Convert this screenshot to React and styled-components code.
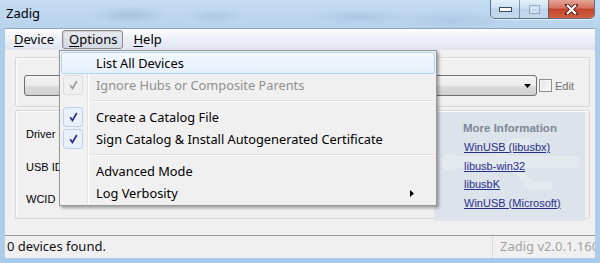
import React from "react";
import styled, { createGlobalStyle } from "styled-components";

const Global = createGlobalStyle`
  html, body { margin: 0; padding: 0; background: #fff; }
  body { width: 600px; height: 263px; overflow: hidden; }
  * { box-sizing: border-box; }
`;

const Window = styled.div`
  position: relative;
  width: 600px;
  height: 263px;
  display: flex;
  flex-direction: column;
  background: #acccea;
  overflow: hidden;
  font-family: "Noto Sans", sans-serif;
`;

const TitleBar = styled.div`
  height: 28px;
  flex: none;
  display: flex;
  justify-content: space-between;
  align-items: flex-start;
  padding: 0 5px 0 6px;
  background:
    radial-gradient(ellipse 40px 9px at 130px 15px, rgba(110, 140, 180, 0.28), transparent),
    radial-gradient(ellipse 30px 8px at 215px 16px, rgba(110, 140, 180, 0.2), transparent),
    radial-gradient(ellipse 50px 8px at 360px 17px, rgba(110, 140, 180, 0.22), transparent),
    radial-gradient(ellipse 60px 10px at 450px 20px, rgba(120, 150, 185, 0.2), transparent),
    linear-gradient(#c4dcf2, #b9d3ed);
`;

const Title = styled.div`
  font-size: 13px;
  line-height: 27px;
  color: #000;
`;

const WinButtons = styled.div`
  display: flex;
  height: 19px;
  border: 1px solid rgba(55, 75, 105, 0.75);
  border-top: none;
  border-radius: 0 0 5px 5px;
  overflow: hidden;
  box-shadow: 0 1px 0 rgba(255, 255, 255, 0.6);
`;

const WinButton = styled.div`
  width: ${(p) => p.$w}px;
  height: 100%;
  display: flex;
  align-items: center;
  justify-content: center;
  border-left: ${(p) => (p.$first ? "none" : "1px solid rgba(60, 80, 110, 0.55)")};
  background: ${(p) =>
    p.$close
      ? "linear-gradient(#e5a598, #d5725f 45%, #c3432d 50%, #d0603f)"
      : "linear-gradient(rgba(255,255,255,0.55), rgba(220,232,245,0.4) 45%, rgba(180,200,225,0.35) 50%, rgba(200,220,240,0.5))"};
`;

const Client = styled.div`
  flex: 1;
  margin: 0 5px;
  display: flex;
  flex-direction: column;
  background: #f0f0f0;
  min-height: 0;
`;

const MenuBar = styled.div`
  height: 22px;
  flex: none;
  display: flex;
  align-items: center;
  padding-left: 1px;
  border-top: 1px solid #8ea6c0;
  background: linear-gradient(#fbfcfe, #eceff7 50%, #dfe4f0);
`;

const MenuBarItem = styled.div`
  height: 19px;
  padding: 0 ${(p) => (p.$active ? 5 : 7)}px 0 ${(p) => (p.$active ? 6 : 7)}px;
  margin-right: ${(p) => (p.$active ? 2 : 0)}px;
  font-size: 13px;
  line-height: 17px;
  color: #000;
  border: 1px solid ${(p) => (p.$active ? "#8b8c8e" : "transparent")};
  border-radius: 3px;
  background: ${(p) =>
    p.$active ? "linear-gradient(#e8ebf0, #dde2e9 50%, #d3d9e2)" : "transparent"};
  box-shadow: ${(p) => (p.$active ? "inset 1px 1px 1px rgba(0,0,0,0.12)" : "none")};
  u { text-decoration: underline; text-underline-offset: 2px; }
`;

const Body = styled.div`
  flex: 1;
  display: flex;
  flex-direction: column;
  gap: 3px;
  padding: 7px 5px 0 10px;
`;

const Panel = styled.div`
  height: ${(p) => p.$h}px;
  border: 1px solid #d7d7d7;
  box-shadow: inset 1px 1px 0 #fbfbfb;
  border-radius: 2px;
`;

const ComboRow = styled.div`
  display: flex;
  align-items: center;
  padding: 17px 0 0 8px;
`;

const Combo = styled.div`
  width: 513px;
  height: 21px;
  border: 1px solid #707070;
  border-radius: 3px;
  background: linear-gradient(#f3f3f3, #ebebeb 50%, #dddddd 51%, #d0d0d0);
  display: flex;
  align-items: center;
  justify-content: flex-end;
  padding-right: 5px;
`;

const CheckBox = styled.div`
  width: 13px;
  height: 13px;
  margin-left: 2px;
  border: 1px solid #8e8f8f;
  background: linear-gradient(135deg, #e4e4e4, #fafafa);
  box-shadow: inset 0 0 0 1px #f4f4f4;
`;

const EditLabel = styled.span`
  margin-left: 3px;
  font-family: "Liberation Sans", Arial, sans-serif;
  font-size: 11px;
  color: #6f6f6f;
`;

const DetailGrid = styled.div`
  height: 100%;
  display: grid;
  grid-template-columns: 1fr 151px;
  padding: 1px 4px 0 10px;
`;

const Labels = styled.div`
  display: flex;
  flex-direction: column;
  gap: 19.5px;
  padding-top: 16px;
`;

const FieldLabel = styled.div`
  height: 13px;
  font-family: "Liberation Sans", Arial, sans-serif;
  font-size: 11px;
  line-height: 13px;
  color: #000;
  sup { font-size: 8px; line-height: 0; vertical-align: 4px; }
`;

const InfoBox = styled.div`
  position: relative;
  height: 109px;
  background: #dde3ea;
  padding: 10px 0 0 29px;
  display: flex;
  flex-direction: column;
  overflow: hidden;
`;

const Watermark = styled.svg`
  position: absolute;
  left: 0;
  top: 0;
  pointer-events: none;
`;

const InfoTitle = styled.div`
  position: relative;
  font-family: "Liberation Sans", Arial, sans-serif;
  font-weight: bold;
  font-size: 11.5px;
  line-height: 13px;
  color: #7c8696;
  margin-bottom: 6px;
`;

const InfoLink = styled.a`
  position: relative;
  font-family: "Liberation Sans", Arial, sans-serif;
  font-size: 11px;
  line-height: 13px;
  height: 18.5px;
  color: #282f8a;
  text-decoration: underline;
  margin-left: 1px;
`;

const StatusBar = styled.div`
  height: 23px;
  flex: none;
  display: flex;
  border-top: 1px solid #9a9a9a;
  background: #f0f0f0;
`;

const StatusText = styled.div`
  flex: 1;
  padding-left: 2px;
  font-size: 13px;
  line-height: 21px;
  color: #111;
`;

const StatusVersion = styled.div`
  width: 103px;
  border-left: 1px solid #dadada;
  padding-left: 7px;
  font-size: 13px;
  line-height: 21px;
  color: #a3a3a3;
  white-space: nowrap;
  overflow: hidden;
`;

const BottomFrame = styled.div`
  height: 5px;
  flex: none;
  background: #a9cae9;
`;

const Menu = styled.div`
  position: absolute;
  left: 59px;
  top: 50px;
  width: 378px;
  height: 156px;
  border: 1px solid #979797;
  padding: 1px 0;
  background: linear-gradient(
    to right,
    #f1f1f1 0 27px,
    #e2e3e3 27px 28px,
    #ffffff 28px 29px,
    #f0f0f0 29px
  );
  box-shadow: 2px 2px 3px rgba(0, 0, 0, 0.35);
  font-family: "Noto Sans", sans-serif;
  display: flex;
  flex-direction: column;
`;

const Item = styled.div`
  height: 22px;
  margin: 0 1px;
  display: grid;
  grid-template-columns: 22px 1fr 24px;
  column-gap: 10px;
  align-items: center;
  padding-left: 2px;
  border: 1px solid ${(p) => (p.$hover ? "#b3d3f3" : "transparent")};
  border-radius: 3px;
  background: ${(p) =>
    p.$hover ? "linear-gradient(#f3f8fe, #e6effb)" : "transparent"};
  font-size: 12.8px;
  color: ${(p) => (p.$disabled ? "#8f8f8f" : "#000")};
`;

const CheckMark = styled.div`
  width: 20px;
  height: 20px;
  margin-left: -1px;
  display: flex;
  align-items: center;
  justify-content: center;
  border: 1px solid ${(p) => (p.$disabled ? "#dcdcdc" : "#b9d1ee")};
  border-radius: 3px;
  background: ${(p) => (p.$disabled ? "#f0f0f0" : "#e9f0f9")};
`;

const Sep = styled.div`
  height: 10px;
  margin-left: 30px;
  margin-right: 2px;
  background: linear-gradient(
    transparent 4px,
    #e0e0e0 4px 5px,
    #ffffff 5px 6px,
    transparent 6px
  );
`;

const Check = ({ disabled }) => (
  <CheckMark $disabled={disabled}>
    <svg width="9" height="10" viewBox="0 0 9 10">
      <path
        d="M1.2 5.2 L3.4 8.4 L7.8 1"
        fill="none"
        stroke={disabled ? "#9a9a9a" : "#1d2b82"}
        strokeWidth="1.6"
      />
    </svg>
  </CheckMark>
);

export default function App() {
  return (
    <>
      <Global />
      <Window>
        <TitleBar>
          <Title>Zadig</Title>
          <WinButtons>
            <WinButton $w={28} $first>
              <svg width="13" height="6" viewBox="0 0 13 6">
                <rect x="0.5" y="1.5" width="12" height="4" fill="#fff" stroke="#3c4a5e" />
              </svg>
            </WinButton>
            <WinButton $w={29}>
              <svg width="11" height="9" viewBox="0 0 11 9">
                <rect x="0.5" y="0.5" width="10" height="8" fill="none" stroke="rgba(90,105,125,0.45)" />
                <rect x="2" y="3" width="7" height="4" fill="none" stroke="rgba(255,255,255,0.5)" />
              </svg>
            </WinButton>
            <WinButton $w={46} $close>
              <svg width="13" height="11" viewBox="0 0 13 11">
                <path d="M2 1 L11 10 M11 1 L2 10" stroke="#5a1d14" strokeWidth="4" strokeLinecap="square" />
                <path d="M2 1 L11 10 M11 1 L2 10" stroke="#fff" strokeWidth="2.2" />
              </svg>
            </WinButton>
          </WinButtons>
        </TitleBar>

        <Client>
          <MenuBar>
            <MenuBarItem>
              <u>D</u>evice
            </MenuBarItem>
            <MenuBarItem $active>
              <u>O</u>ptions
            </MenuBarItem>
            <MenuBarItem>
              <u>H</u>elp
            </MenuBarItem>
          </MenuBar>

          <Body>
            <Panel $h={50}>
              <ComboRow>
                <Combo>
                  <svg width="7" height="4" viewBox="0 0 7 4">
                    <path d="M0 0 H7 L3.5 4 Z" fill="#000" />
                  </svg>
                </Combo>
                <CheckBox />
                <EditLabel>Edit</EditLabel>
              </ComboRow>
            </Panel>
            <Panel $h={109}>
              <DetailGrid>
                <Labels>
                  <FieldLabel>Driver</FieldLabel>
                  <FieldLabel>USB ID</FieldLabel>
                  <FieldLabel>
                    WCID <sup>?</sup>
                  </FieldLabel>
                </Labels>
                <InfoBox>
                  <Watermark width="151" height="109" viewBox="0 0 151 109">
                    <g fill="#ffffff" opacity="0.22">
                      <circle cx="16" cy="50" r="9" />
                      <rect x="16" y="44" width="128" height="12" rx="3" />
                      <path d="M60 44 L78 26 H96 V34 H82 L68 48 Z" />
                      <path d="M86 56 L100 70 H118 V78 H96 L80 60 Z" />
                    </g>
                  </Watermark>
                  <InfoTitle>More Information</InfoTitle>
                  <InfoLink>WinUSB (libusbx)</InfoLink>
                  <InfoLink>libusb-win32</InfoLink>
                  <InfoLink>libusbK</InfoLink>
                  <InfoLink>WinUSB (Microsoft)</InfoLink>
                </InfoBox>
              </DetailGrid>
            </Panel>
          </Body>

          <StatusBar>
            <StatusText>0 devices found.</StatusText>
            <StatusVersion>Zadig v2.0.1.160</StatusVersion>
          </StatusBar>
        </Client>
        <BottomFrame />

        <Menu>
          <Item $hover>
            <span />
            <span>List All Devices</span>
          </Item>
          <Item $disabled>
            <Check disabled />
            <span>Ignore Hubs or Composite Parents</span>
          </Item>
          <Sep />
          <Item>
            <Check />
            <span>Create a Catalog File</span>
          </Item>
          <Item>
            <Check />
            <span>Sign Catalog &amp; Install Autogenerated Certificate</span>
          </Item>
          <Sep />
          <Item>
            <span />
            <span>Advanced Mode</span>
          </Item>
          <Item>
            <span />
            <span>Log Verbosity</span>
            <svg width="4" height="7" viewBox="0 0 4 7">
              <path d="M0 0 L4 3.5 L0 7 Z" fill="#000" />
            </svg>
          </Item>
        </Menu>
      </Window>
    </>
  );
}
